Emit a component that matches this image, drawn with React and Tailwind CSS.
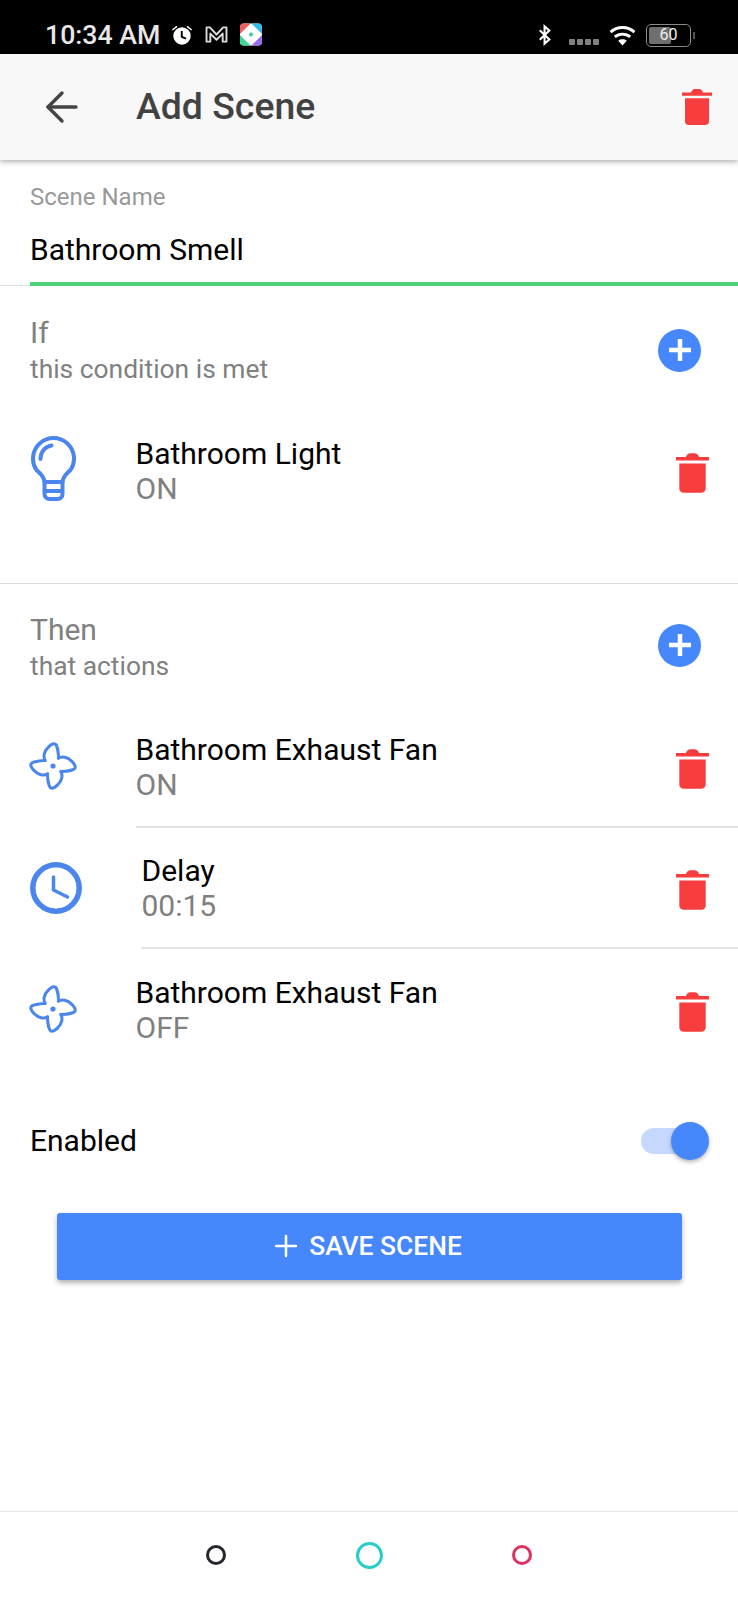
import React from "react";
import { Plus, ArrowLeft } from "lucide-react";

const Trash = ({ className = "" }) => (
  <svg viewBox="0 0 30 36" className={className} fill="#f83d3f">
    <path d="M0 3.500h9C10 1 11 0 13 0h4c2 0 3 1 4 3.500h9V6.700H0Z" />
    <path d="M3 9.300h24V32a4 4 0 0 1-4 4H7a4 4 0 0 1-4-4Z" />
  </svg>
);

const AddBtn = () => (
  <div className="w-[43px] h-[43px] rounded-full bg-[#4688fb] flex items-center justify-center">
    <svg width="24" height="24" viewBox="0 0 24 24" stroke="#fff" strokeWidth="4.5" fill="none">
      <path d="M12 1v22M1 12h22" />
    </svg>
  </div>
);

const Bulb = () => (
  <svg width="45" height="66" viewBox="0 0 45 66" fill="none" stroke="#4a86ec" strokeWidth="4" strokeLinecap="round" strokeLinejoin="round" className="ml-px -mt-[4px]">
    <path d="M13.500 46C13 40 9 37.500 5.500 34A20.500 20.500 0 1 1 39.500 34C36 37.500 32 40 31.500 46Z" />
    <path d="M13.500 46V58a5 5 0 0 0 5 5h8a5 5 0 0 0 5-5V46M13.500 55H31.500" />
    <path d="M9.500 23C9.500 16 14 10.500 20.500 9.500" />
  </svg>
);

const FanIcon = () => (
  <svg width="48" height="48" viewBox="-24 -24 48 48" fill="none" stroke="#4a86ec" strokeWidth="3" strokeLinecap="round" strokeLinejoin="round" className="-ml-px -mt-[2px]">
    {[10, 100, 190, 280].map((a) => (
      <path key={a} transform={`rotate(${a})`} d="M-8.500 -4C-11.500 -7 -11.500 -13 -8 -17.500C-6 -20.500 -3.500 -22.500 -1.500 -22C0.500 -21 3 -14 4 -9.300" />
    ))}
    <circle r="2.600" fill="#4a86ec" stroke="none" />
  </svg>
);

const ClockIcon = () => (
  <svg width="52" height="52" viewBox="0 0 52 52" fill="none" stroke="#4a86ec" strokeLinecap="round" strokeLinejoin="round">
    <circle cx="26" cy="26" r="23.200" strokeWidth="5.500" />
    <path d="M23.500 15V28L37.500 35" strokeWidth="3.500" />
  </svg>
);

const Row = ({ icon, title, sub, textX = "w-[105.500px]", divider, dividerClass }) => (
  <div className="relative flex items-center h-[121.5px] pl-[30px] pr-[29px]">
    <div className={`${textX} shrink-0`}>{icon}</div>
    <div className="flex-1">
      <div className="text-[30px] leading-[35px] text-black">{title}</div>
      <div className="text-[30px] leading-[35px] text-[#808080]">{sub}</div>
    </div>
    <Trash className="w-[33px] h-[40px] mt-[4px]" />
    {divider && <div className={`absolute bottom-0 right-0 h-[2px] bg-[#e2e2e2] ${dividerClass}`} />}
  </div>
);

export default function App() {
  return (
    <div className="w-[738px] h-[1600px] bg-white flex flex-col overflow-hidden" style={{ fontFamily: "Roboto, sans-serif" }}>
      {/* status bar */}
      <div className="h-[54px] bg-black flex items-center justify-between pl-[45px] pr-[43px] pt-[16px] shrink-0 text-[#e8e8e8]">
        <div className="flex items-center">
          <span className="text-[26.7px] font-medium leading-none">10:34 AM</span>
          <svg width="22" height="22" viewBox="0 0 24 24" className="ml-[11px]" fill="#fff">
            <path fillRule="evenodd" d="M12 3.500a9.500 9.500 0 1 1 0 19 9.500 9.500 0 0 1 0-19Zm-1.300 4v7.200l5.300 2.200.8-1.900-4-1.700V7.500Z" />
            <path d="M1 6l5-4 1 1.200-5 4ZM23 6l-5-4-1 1.200 5 4Z" />
          </svg>
          <svg width="23" height="19" viewBox="0 0 24 20" className="ml-[12px]" fill="none" stroke="#ddd" strokeWidth="2" strokeLinejoin="round">
            <path d="M1.500 2.500h3.500L12 10l7-7.500h3.500v15h-4V9l-6.500 6.500L5.500 9v8.500h-4Z" />
          </svg>
          <svg width="22" height="23" viewBox="0 0 23 23" className="ml-[12px]">
            <rect width="23" height="23" rx="4" fill="#fff" />
            <path d="M4 0h7L0 11V4a4 4 0 0 1 4-4Z" fill="#f25c63" />
            <path d="M12 0h7a4 4 0 0 1 4 4v7Z" fill="#35b9ea" />
            <path d="M0 12l11 11H4a4 4 0 0 1-4-4Z" fill="#3bd993" />
            <path d="M23 12v7a4 4 0 0 1-4 4h-7Z" fill="#9a6cf0" />
            <path d="M11.500 9l2.500 2.500-2.500 2.500L9 11.500Z" fill="#3bc9a0" />
          </svg>
        </div>
        <div className="flex items-center">
          <svg width="14" height="24" viewBox="0 0 16 24" fill="none" stroke="#fff" strokeWidth="2.400">
            <path d="M2 6.500l11 10.500-5.500 5V2L13 7 2 17.500" />
          </svg>
          <div className="flex gap-[2px] ml-[17px] mt-[14px]">
            {[0, 1, 2, 3].map((i) => (
              <div key={i} className="w-[6px] h-[6px] rounded-[1px] bg-[#808080]" />
            ))}
          </div>
          <svg width="27" height="21" viewBox="0 0 28 22" className="ml-[10px]" fill="none" stroke="#fff" strokeWidth="3">
            <path d="M1.500 7.500c7-6.500 18-6.500 25 0M6 12.500c4.500-4 11.500-4 16 0" />
            <path d="M9.500 16.500c2.500-2 6.500-2 9 0L14 21.500Z" fill="#fff" stroke="none" />
          </svg>
          <div className="relative w-[45px] h-[23px] ml-[10px] rounded-[5px] border border-[#8a8a8a] overflow-hidden">
            <div className="absolute left-[2px] top-[2px] bottom-[2px] w-[22px] rounded-[2px] bg-[#6f6f6f]" />
            <div className="absolute inset-0 flex items-center justify-center text-[16px] leading-none text-[#f0f0f0]">60</div>
          </div>
          <div className="w-[2px] h-[7px] ml-[2px] bg-[#555]" />
        </div>
      </div>

      {/* header */}
      <div className="h-[106px] shrink-0 bg-[#f8f8f8] flex items-center pl-[44px] pr-[26px] shadow-[0_2px_5px_rgba(0,0,0,0.3)] relative">
        <div className="w-[38px] h-[48px] flex items-center">
          <ArrowLeft size={48} strokeWidth={1.7} color="#444444" className="shrink-0 -ml-[6px]" />
        </div>
        <div className="ml-[54px] text-[37.4px] font-medium leading-none text-[#424242] flex-1">Add Scene</div>
        <Trash className="w-[30px] h-[36px]" />
      </div>

      {/* scene name */}
      <div className="shrink-0">
        <div className="pl-[30px] pt-[24px] text-[24px] leading-[26px] text-[#999999]">Scene Name</div>
        <div className="pl-[30px] pt-[21px] text-[30px] leading-[38px] text-black">Bathroom Smell</div>
        <div className="flex items-end h-[17px]">
          <div className="w-[30px] h-px bg-[#dddddd]" />
          <div className="flex-1 h-[4px] bg-[#4cd17a]" />
        </div>
      </div>

      {/* if */}
      <div className="shrink-0 h-[298px] border-b border-[#dddddd] flex flex-col">
        <div className="flex items-center justify-between h-[124px] pl-[30px] pr-[37px] pt-[4px]">
          <div className="pt-[2px]">
            <div className="text-[30px] leading-[37px] text-[#808080]">If</div>
            <div className="text-[26.4px] leading-[37px] text-[#808080]">this condition is met</div>
          </div>
          <AddBtn />
        </div>
        <Row icon={<Bulb />} title="Bathroom Light" sub="ON" />
      </div>

      {/* then */}
      <div className="shrink-0 flex flex-col">
        <div className="flex items-center justify-between h-[122px] pl-[30px] pr-[37px]">
          <div className="pt-[6px]">
            <div className="text-[30px] leading-[37px] text-[#808080]">Then</div>
            <div className="text-[26.4px] leading-[37px] text-[#808080]">that actions</div>
          </div>
          <AddBtn />
        </div>
        <Row icon={<FanIcon />} title="Bathroom Exhaust Fan" sub="ON" divider dividerClass="left-[136px]" />
        <Row icon={<ClockIcon />} textX="w-[111.500px]" title="Delay" sub="00:15" divider dividerClass="left-[141px]" />
        <Row icon={<FanIcon />} title="Bathroom Exhaust Fan" sub="OFF" />
      </div>

      {/* enabled */}
      <div className="shrink-0 flex items-center justify-between h-[60px] mt-[40px] pl-[30px] pr-[29px]">
        <div className="text-[30px] leading-none text-black">Enabled</div>
        <div className="relative w-[68px] h-[38px] flex items-center">
          <div className="absolute left-0 right-[4px] h-[26px] rounded-full bg-[#c5d8fd]" />
          <div className="absolute right-0 w-[38px] h-[38px] rounded-full bg-[#4688fb] shadow-[0_2px_4px_rgba(0,0,0,0.3)]" />
        </div>
      </div>

      {/* save */}
      <div className="shrink-0 mt-[42px] pl-[57px] pr-[56px]">
        <div className="h-[67px] rounded-[3px] bg-[#4688fb] shadow-[0_3px_5px_rgba(0,0,0,0.3)] flex items-center justify-center text-white pr-[8px]">
          <Plus size={34} strokeWidth={1.8} className="mr-[6px]" />
          <span className="text-[26.4px] font-medium leading-none">SAVE SCENE</span>
        </div>
      </div>

      <div className="flex-1" />

      {/* nav */}
      <div className="shrink-0 h-[89px] border-t border-[#e6e6e6] relative flex items-center justify-center">
        <div className="flex items-center gap-[129.5px] -mt-[2px]">
          <div className="w-[20px] h-[20px] rounded-full border-[3px] border-[#26262c]" />
          <div className="w-[27px] h-[27px] rounded-full border-[3px] border-[#28cdc9]" />
          <div className="w-[20px] h-[20px] rounded-full border-[3px] border-[#df3160]" />
        </div>
      </div>
    </div>
  );
}
